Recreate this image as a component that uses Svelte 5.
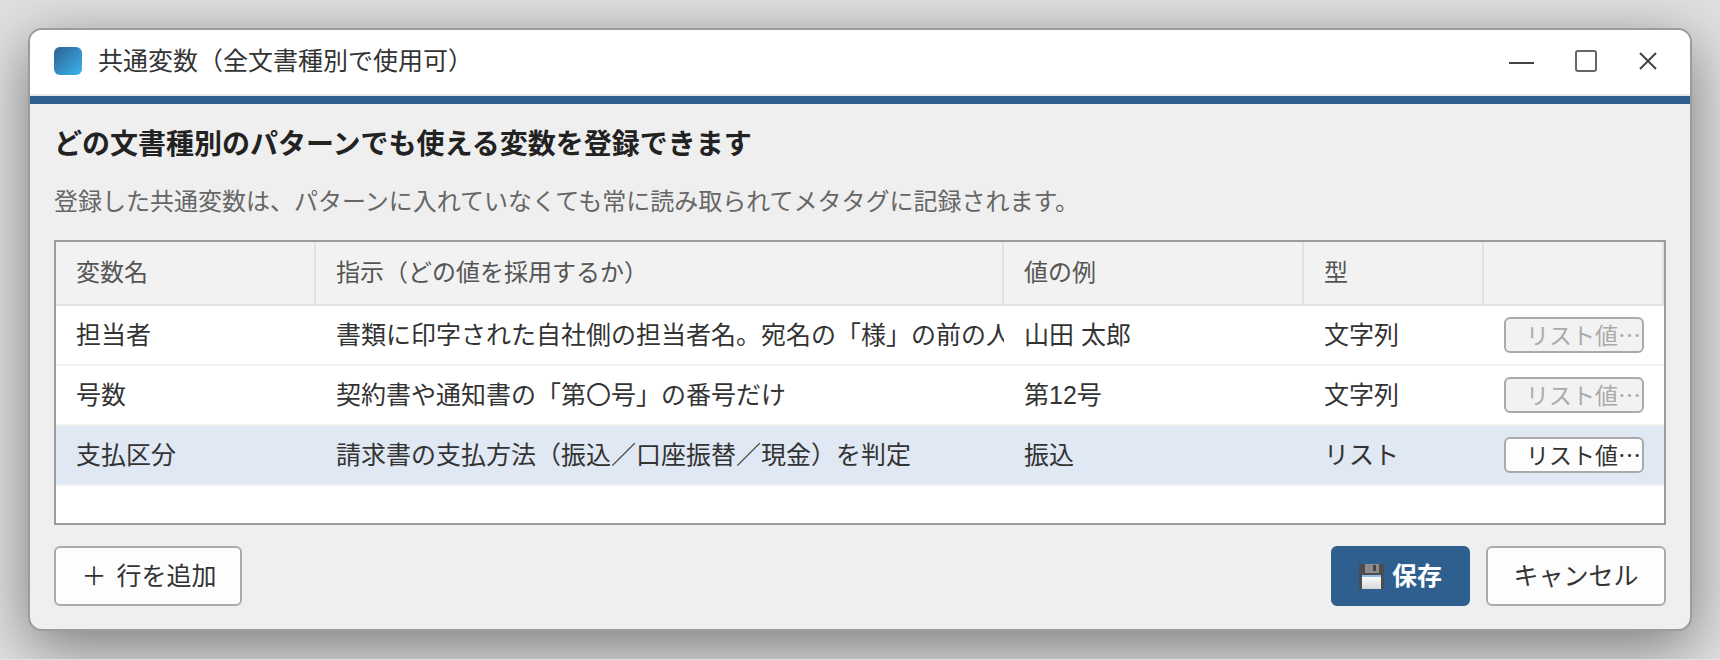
<script>
  const columns = ['変数名', '指示（どの値を採用するか）', '値の例', '型', ''];
  const rows = [
    { name: '担当者', hint: '書類に印字された自社側の担当者名。宛名の「様」の前の人名', sample: '山田 太郎', type: '文字列', list: false },
    { name: '号数', hint: '契約書や通知書の「第〇号」の番号だけ', sample: '第12号', type: '文字列', list: false },
    { name: '支払区分', hint: '請求書の支払方法（振込／口座振替／現金）を判定', sample: '振込', type: 'リスト', list: true }
  ];
</script>

<div class="window" lang="ja">
  <header class="titlebar">
    <span class="app-icon"></span>
    <h1>共通変数（全文書種別で使用可）</h1>
    <div class="controls">
      <svg width="25" height="24" viewBox="0 0 25 24"><path d="M0 14h25" stroke="#444" stroke-width="2" /></svg>
      <svg width="24" height="24" viewBox="0 0 24 24"><rect x="2" y="2" width="20" height="20" rx="2" fill="none" stroke="#666" stroke-width="2" /></svg>
      <svg width="20" height="20" viewBox="0 0 20 20"><path d="M2 2l16 16M18 2L2 18" stroke="#444" stroke-width="2" fill="none" /></svg>
    </div>
  </header>
  <div class="accent"></div>
  <main class="content">
    <h2>どの文書種別のパターンでも使える変数を登録できます</h2>
    <p>登録した共通変数は、パターンに入れていなくても常に読み取られてメタタグに記録されます。</p>
    <div class="table-box">
      <table>
        <colgroup>
          <col class="c1" /><col class="c2" /><col class="c3" /><col class="c4" /><col class="c5" />
        </colgroup>
        <thead>
          <tr>{#each columns as c}<th>{c}</th>{/each}</tr>
        </thead>
        <tbody>
          {#each rows as r}
            <tr class:selected={r.list}>
              <td>{r.name}</td>
              <td><div class="clip">{r.hint}</div></td>
              <td>{r.sample}</td>
              <td>{r.type}</td>
              <td><button class="list-btn" disabled={!r.list}>リスト値<span class="dots">…</span></button></td>
            </tr>
          {/each}
        </tbody>
      </table>
    </div>
    <footer>
      <button class="btn add">＋ 行を追加</button>
      <div class="right">
        <button class="btn save">
          <svg width="25" height="25" viewBox="0 0 25 25">
            <defs>
              <linearGradient id="label" x1="0" y1="0" x2="0" y2="1">
                <stop offset="0" stop-color="#ffffff" />
                <stop offset="1" stop-color="#d4d8dc" />
              </linearGradient>
            </defs>
            <path d="M0 0h25v25H0z" fill="#4d4d4d" />
            <path d="M6 0h14v9H6z" fill="#8c8c8c" />
            <path d="M14 1h3v6h-3z" fill="#444" />
            <path d="M3 11h19v14H3z" fill="url(#label)" />
            <path d="M3 11h19v2H3z" fill="#8fbdea" />
          </svg>
          保存
        </button>
        <button class="btn cancel">キャンセル</button>
      </div>
    </footer>
  </main>
</div>

<style>
  :global(body) {
    margin: 0;
    background: #e0e0e0;
    font-family: "Liberation Sans", "Noto Sans CJK JP", sans-serif;
  }
  :global(#app) {
    padding: 28px;
    width: 1664px;
    height: 603px;
  }
  .window {
    box-sizing: border-box;
    width: 1664px;
    height: 603px;
    border: 2px solid #9c9c9c;
    border-radius: 14px;
    background: #efefef;
    overflow: hidden;
    box-shadow: 0 16px 60px rgba(0, 0, 0, 0.46);
    display: flex;
    flex-direction: column;
  }
  .titlebar {
    height: 62px;
    background: #fff;
    border-bottom: 2px solid #e4e8ec;
    display: flex;
    align-items: center;
    padding: 0 32px 2px 24px;
  }
  .app-icon {
    width: 28px;
    height: 28px;
    border-radius: 6px;
    background: linear-gradient(135deg, #2f5f8f, #38b6f0);
    margin-right: 16px;
  }
  h1 {
    margin: 0;
    font-size: 25px;
    line-height: 36px;
    font-weight: 400;
    color: #333;
    flex: 1;
    white-space: nowrap;
  }
  .controls {
    display: flex;
    align-items: center;
    gap: 40px;
  }
  .accent {
    height: 8px;
    background: #2f5f8f;
  }
  .content {
    flex: 1;
    padding: 0 24px;
    display: flex;
    flex-direction: column;
  }
  h2 {
    margin: 21px 0 0;
    font-size: 28px;
    line-height: 40px;
    font-weight: 700;
    color: #222;
  }
  p {
    margin: 17px 0 0;
    font-size: 24px;
    line-height: 40px;
    color: #666;
  }
  .table-box {
    box-sizing: border-box;
    margin-top: 18px;
    height: 285px;
    border: 2px solid #9c9c9c;
    background: #fff;
  }
  table {
    border-collapse: separate;
    border-spacing: 0;
    table-layout: fixed;
    width: 1608px;
    font-size: 25px;
    line-height: 36px;
  }
  .c1 { width: 260px; }
  .c2 { width: 688px; }
  .c3 { width: 300px; }
  .c4 { width: 180px; }
  .c5 { width: 180px; }
  th {
    box-sizing: border-box;
    height: 64px;
    background: #f2f2f2;
    border-right: 2px solid #e2e2e2;
    border-bottom: 2px solid #e2e2e2;
    padding: 0 20px;
    text-align: left;
    font-size: 24px;
    font-weight: 400;
    color: #555;
  }
  td {
    box-sizing: border-box;
    height: 60px;
    padding: 0 20px;
    border-bottom: 2px solid #f0f0f0;
    color: #333;
    white-space: nowrap;
    overflow: hidden;
  }
  tr.selected td {
    background: #e0e8f3;
  }
  .clip {
    overflow: hidden;
    margin-right: -20px;
    white-space: nowrap;
  }
  .list-btn {
    box-sizing: border-box;
    display: block;
    width: 140px;
    height: 36px;
    padding: 0 0 0 20px;
    border: 2px solid #aaa;
    border-radius: 6px;
    background: #fdfdfd;
    color: #333;
    font-family: inherit;
    font-size: 23px;
    line-height: 30px;
    white-space: nowrap;
    overflow: hidden;
    text-align: left;
  }
  .dots {
    font-family: "Noto Sans CJK JP", sans-serif;
  }
  .list-btn:disabled {
    background: #f2f2f2;
    color: #aaa;
  }
  footer {
    margin-top: 21px;
    display: flex;
    justify-content: space-between;
  }
  .right {
    display: flex;
    gap: 16px;
  }
  .btn {
    box-sizing: border-box;
    height: 60px;
    border: 2px solid #aaa;
    border-radius: 6px;
    background: #fdfdfd;
    color: #333;
    font-family: inherit;
    font-size: 25px;
    line-height: 36px;
    padding: 0;
    display: flex;
    align-items: center;
    justify-content: center;
  }
  .add {
    width: 188px;
    word-spacing: 3px;
    padding-left: 2px;
  }
  .save {
    width: 139px;
    background: #2f5f8f;
    border-color: #2f5f8f;
    color: #fff;
    font-weight: 700;
    gap: 8px;
  }
  .cancel { width: 180px; }
</style>
